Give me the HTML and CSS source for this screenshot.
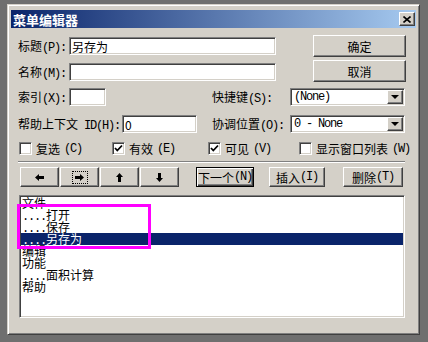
FILE: index.html
```html
<!DOCTYPE html>
<html>

<head>
  <meta charset="UTF-8">
  <title>菜单编辑器</title>
  <link rel="stylesheet" href="styles.css">
</head>

<body>
  <div class="win">
    <div class="titlebar">
      <span class="caption">菜单编辑器</span>
      <span class="btn close">
        <svg width="8" height="7" viewBox="0 0 8 7"><path d="M0.5 0.5L7.5 6.5M7.5 0.5L0.5 6.5" stroke="#000" stroke-width="1.6"/></svg>
      </span>
    </div>

    <div class="content">
      <div class="top">
        <div class="fields">
          <div class="row">
            <span class="lab">标题<span class="k">(P):</span></span>
            <span class="field w-wide">另存为</span>
          </div>
          <div class="row">
            <span class="lab">名称<span class="k">(M):</span></span>
            <span class="field w-wide"></span>
          </div>
        </div>
        <div class="actions">
          <span class="btn act">确定</span>
          <span class="btn act">取消</span>
        </div>
      </div>

      <div class="row row3">
        <div class="half">
          <span class="lab">索引<span class="k">(X):</span></span>
          <span class="field w-index"></span>
        </div>
        <span class="lab2">快捷键<span class="k">(S):</span></span>
        <span class="field select"><span class="val">(None)</span><span class="btn drop"><i class="tri"></i></span></span>
      </div>

      <div class="row row4">
        <div class="half">
          <span class="lab lab-help">帮助上下文<span class="k"> ID(H):</span></span>
          <span class="field w-help">0</span>
        </div>
        <span class="lab2">协调位置<span class="k">(O):</span></span>
        <span class="field select"><span class="val">0 - None</span><span class="btn drop"><i class="tri"></i></span></span>
      </div>

      <div class="checks">
        <label class="chk"><span class="box"></span>复选<span class="k">(C)</span></label>
        <label class="chk"><span class="box"><svg width="9" height="9" viewBox="0 0 9 9"><path d="M1 4L3.3 6.5L8 1.5" stroke="#000" stroke-width="1.8" fill="none"/></svg></span>有效<span class="k">(E)</span></label>
        <label class="chk"><span class="box"><svg width="9" height="9" viewBox="0 0 9 9"><path d="M1 4L3.3 6.5L8 1.5" stroke="#000" stroke-width="1.8" fill="none"/></svg></span>可见<span class="k">(V)</span></label>
        <label class="chk"><span class="box"></span>显示窗口列表<span class="k">(W)</span></label>
      </div>

      <div class="sep"></div>

      <div class="tools">
        <div class="arrows">
          <span class="btn arr"><svg width="9" height="7" viewBox="0 0 9 7"><path d="M0 3.5L4 0v2h5v3H4v2z"/></svg></span>
          <span class="btn arr"><span class="focus"><svg width="9" height="7" viewBox="0 0 9 7"><path d="M9 3.5L5 0v2H0v3h5v2z"/></svg></span></span>
          <span class="btn arr"><svg width="7" height="9" viewBox="0 0 7 9"><path d="M3.5 0L7 4H5v5H2V4H0z"/></svg></span>
          <span class="btn arr"><svg width="7" height="9" viewBox="0 0 7 9"><path d="M3.5 9L7 5H5V0H2v5H0z"/></svg></span>
        </div>
        <span class="btn def next">下一个<span class="k">(N)</span></span>
        <span class="btn ins">插入<span class="k">(I)</span></span>
        <span class="btn del">删除<span class="k">(T)</span></span>
      </div>

      <div class="list">
        <div class="item">文件</div>
        <div class="item"><span class="dots">....</span>打开</div>
        <div class="item"><span class="dots">....</span>保存</div>
        <div class="item sel"><span class="dots">....</span>另存为</div>
        <div class="item">编辑</div>
        <div class="item">功能</div>
        <div class="item"><span class="dots">....</span>面积计算</div>
        <div class="item">帮助</div>
      </div>
    </div>

    <div class="mark"></div>
  </div>
</body>

</html>
```

FILE: styles.css
```css
* {
  margin: 0;
  padding: 0;
  box-sizing: border-box;
}

body {
  background: #6f6f6f;
  font-family: "Noto Sans CJK SC", sans-serif;
  font-size: 12px;
  color: #000;
}

.k,
.dots,
.val {
  font-family: "Liberation Mono", "Noto Sans CJK SC", monospace;
  font-size: 12px;
  letter-spacing: -1.2px;
}

/* window frame */
.win {
  position: relative;
  width: 413px;
  height: 331px;
  margin: 4px 0 0 7px;
  padding: 5px 3px 3px 3px;
  background: #d4d0c8;
  border: 1px solid;
  border-color: #d4d0c8 #404040 #404040 #d4d0c8;
  box-shadow: inset 1px 1px #fff, inset -1px -1px #808080;
}

.titlebar {
  height: 18px;
  padding: 0 1px 0 2px;
  display: flex;
  align-items: center;
  justify-content: space-between;
  background: linear-gradient(to right, #0a246a, #a6caf0);
  color: #fff;
  font-size: 13px;
  font-weight: bold;
}

/* classic 3d button */
.btn {
  display: flex;
  align-items: center;
  justify-content: center;
  background: #d4d0c8;
  border: 1px solid;
  border-color: #fff #404040 #404040 #fff;
  box-shadow: inset -1px -1px #808080;
  white-space: nowrap;
}

.btn.def {
  border: 1px solid #000;
  box-shadow: inset 1px 1px #fff, inset -1px -1px #404040, inset -2px -2px #808080;
}

.close {
  width: 16px;
  height: 14px;
}

/* sunken field */
.field {
  display: flex;
  align-items: center;
  height: 18px;
  padding: 0 2px;
  background: #fff;
  border: 1px solid;
  border-color: #808080 #fff #fff #808080;
  box-shadow: inset 1px 1px #404040, inset -1px -1px #d4d0c8;
  white-space: nowrap;
}

.content {
  padding: 7px 10px 0 7px;
}

.top {
  display: flex;
}

.fields {
  width: 258px;
  padding-top: 2px;
  display: flex;
  flex-direction: column;
  gap: 8px;
}

.actions {
  margin-left: 37px;
  display: flex;
  flex-direction: column;
  gap: 3px;
}

.act {
  width: 93px;
  height: 22px;
}

.row {
  display: flex;
  align-items: center;
  height: 18px;
}

.lab {
  width: 51px;
  white-space: nowrap;
}

.lab-help {
  width: 104px;
}

.w-wide {
  width: 207px;
}

.w-index {
  width: 37px;
}

.w-help {
  width: 75px;
}

.row3 {
  margin-top: 6px;
}

.row4 {
  margin-top: 9px;
}

.half {
  width: 194px;
  display: flex;
  align-items: center;
}

.lab2 {
  width: 78px;
  white-space: nowrap;
}

.select {
  width: 115px;
  padding: 0 2px 0 3px;
  justify-content: space-between;
}

.drop {
  width: 16px;
  height: 14px;
  margin-right: -1px;
}

.tri {
  width: 0;
  height: 0;
  border-left: 4px solid transparent;
  border-right: 4px solid transparent;
  border-top: 4px solid #000;
}

.checks {
  margin: 7px 0 0 1px;
  height: 13px;
  display: grid;
  grid-template-columns: 93px 96px 91px auto;
}

.chk {
  display: flex;
  align-items: center;
  gap: 4px;
  white-space: nowrap;
}

.box {
  width: 13px;
  height: 13px;
  display: flex;
  align-items: center;
  justify-content: center;
  background: #fff;
  border: 1px solid;
  border-color: #808080 #fff #fff #808080;
  box-shadow: inset 1px 1px #404040, inset -1px -1px #d4d0c8;
}

.sep {
  margin-top: 8px;
  width: 387px;
  height: 2px;
  border-top: 1px solid #808080;
  border-bottom: 1px solid #fff;
}

.tools {
  margin: 4px 0 0 2px;
  height: 20px;
  display: flex;
}

.arrows {
  display: flex;
  gap: 1px;
}

.arr {
  width: 39px;
  height: 20px;
}

.focus {
  display: flex;
  align-items: center;
  justify-content: center;
  width: 14px;
  height: 11px;
  outline: 1px dotted #000;
}

.next {
  width: 58px;
  height: 20px;
  margin-left: 17px;
}

.ins {
  width: 56px;
  height: 20px;
  margin-left: 15px;
}

.del {
  width: 60px;
  height: 20px;
  margin-left: 18px;
}

/* menu list */
.list {
  margin: 8px 0 0 1px;
  width: 386px;
  height: 123px;
  padding: 0;
  background: #fff;
  border: 1px solid;
  border-color: #808080 #fff #fff #808080;
  box-shadow: inset 1px 1px #404040, inset -1px -1px #d4d0c8;
  overflow: hidden;
}

.item {
  height: 12px;
  line-height: 12px;
  margin: 0 1px;
  padding-left: 1px;
  white-space: nowrap;
}

.item:first-child {
  margin-top: 1px;
}

.item.sel {
  background: #0a246a;
  color: #fff;
}

.mark {
  position: absolute;
  left: 9px;
  top: 199px;
  width: 134px;
  height: 45px;
  border: 3px solid #f0f;
}
```
